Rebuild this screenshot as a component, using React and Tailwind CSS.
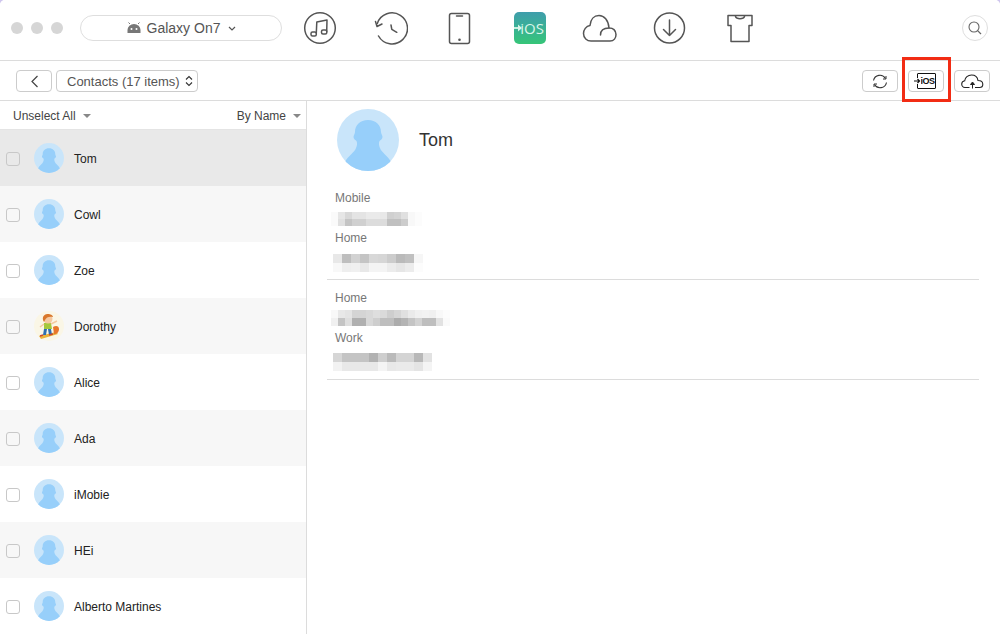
import React from "react";

const S = { fill: "none", stroke: "#555", strokeWidth: 1.5, strokeLinecap: "round", strokeLinejoin: "round" };

function Slot({ c, children }) {
  return (
    <div className="w-[70px] flex justify-center">
      <svg width="36" height="36" viewBox={`${c - 18} 10 36 36`}>{children}</svg>
    </div>
  );
}

function Person({ size }) {
  return (
    <svg width={size} height={size} viewBox="0 0 62 62" className="shrink-0">
      <defs>
        <clipPath id={`c${size}`}><circle cx="31" cy="31" r="31" /></clipPath>
      </defs>
      <circle cx="31" cy="31" r="31" fill="#c9e5fa" />
      <g clipPath={`url(#c${size})`}>
        <path d="M31 11c8 0 13 5 13 12 0 2 1.500 3 1.500 5 0 2-2 3-3 4-1 2-.5 5 .5 7 1 4 8 8 11 14V64H8V53c3-6 10-10 11-14 1-2 1.500-5 .5-7-1-1-3-2-3-4 0-2 1.500-3 1.500-5 0-7 5-12 13-12z" fill="#97cffa" />
      </g>
    </svg>
  );
}

function Dorothy() {
  return (
    <svg width="30" height="30" viewBox="0 0 30 30" className="shrink-0">
      <circle cx="15" cy="15" r="15" fill="#faf6e6" />
      <path d="M5 25l17-4 2 2-17 5z" fill="#e9b23a" />
      <path d="M19 16c3-2 6-1 6 2s-2 5-5 5z" fill="#e8762a" />
      <path d="M10 12h7l1 6h-8z" fill="#a5c83c" />
      <path d="M10 18h3l-1 6H9zM14 18h3l1 6h-3z" fill="#2f6fb0" />
      <circle cx="14" cy="8" r="4.500" fill="#f5c9a0" />
      <path d="M9 9c-1-5 3-6 5-6s5 1 5 3c-3-1-7 0-8 3l-1 2z" fill="#d9772b" />
      <path d="M17 13l6-3M10 13l-4 3" stroke="#f5c9a0" strokeWidth="1.500" />
      <path d="M6 25l3-1M15 24l4-1" stroke="#c9472f" strokeWidth="1.500" />
    </svg>
  );
}

function Mosaic({ w, h, rows }) {
  return (
    <div className="flex flex-col">
      {rows.map((r, i) => (
        <div key={i} className="flex">
          {r.map((v, j) => (
            <div key={j} style={{ width: w, height: h, background: `rgb(${v},${v},${v})` }} />
          ))}
        </div>
      ))}
    </div>
  );
}

function Field({ label, children, ml, pt }) {
  return (
    <div>
      <div className="h-5 pl-[8px] text-xs leading-5 text-[#777]">{label}</div>
      <div className={`h-5 ${ml} ${pt}`}>{children}</div>
    </div>
  );
}

const contacts = ["Tom", "Cowl", "Zoe", "Dorothy", "Alice", "Ada", "iMobie", "HEi", "Alberto Martines"];

export default function App() {
  return (
    <div className="w-[1000px] h-[635px] overflow-hidden bg-[#cfc6ee] font-['Liberation_Sans',sans-serif]">
      <div className="h-full bg-white rounded-t-[5px] overflow-hidden relative">
        {/* Title bar */}
        <div className="h-[61px] border-b border-[#dcdcdc] flex items-center pb-1 bg-white">
          <div className="flex gap-2 pl-[11px] w-[80px]">
            <div className="size-3 rounded-full bg-[#d6d6d6]" />
            <div className="size-3 rounded-full bg-[#d6d6d6]" />
            <div className="size-3 rounded-full bg-[#d6d6d6]" />
          </div>
          <div className="w-[202px] h-[26px] rounded-full border border-[#dedede] flex items-center justify-center gap-[5px] text-sm text-[#555] mr-[3px]">
            <svg width="16" height="12" viewBox="0 0 16 12">
              <path d="M1.500 11V8a6.500 6 0 0 1 13 0v3z" fill="#777" />
              <path d="M4 2L2.500 .5M12 2l1.500-1.500" stroke="#777" strokeWidth="1" />
              <circle cx="5.500" cy="7" r="1" fill="#fff" />
              <circle cx="10.500" cy="7" r="1" fill="#fff" />
            </svg>
            <span>Galaxy On7</span>
            <svg width="8" height="5" viewBox="0 0 8 5" className="ml-[3px]">
              <path d="M1 1l3 3 3-3" fill="none" stroke="#555" strokeWidth="1.200" />
            </svg>
          </div>
          <Slot c={320}>
            <circle cx="320" cy="28" r="15.300" {...S} />
            <path d="M316.300 33l.5-11 10.200-2-.3 11.500" {...S} />
            <rect x="311" y="32" width="5.300" height="4" rx="1.500" {...S} />
            <rect x="321.500" y="30" width="5.300" height="4" rx="1.500" {...S} />
          </Slot>
          <Slot c={390}>
            <path d="M377.300 23.500A15.500 15.500 0 1 1 378.500 36" {...S} />
            <path d="M375.500 21.500l1.500 5 5-2.500" {...S} />
            <path d="M391 25l.8 4.300 5 3" {...S} />
          </Slot>
          <Slot c={460}>
            <rect x="449.500" y="13.500" width="20" height="30" rx="2" {...S} />
            <path d="M456.500 16h6" {...S} />
            <circle cx="459.500" cy="39.800" r="1.300" fill="#555" />
          </Slot>
          <div className="w-[70px] flex justify-center">
            <div className="w-8 h-8 rounded-[5px] bg-linear-to-b from-[#3f9dab] to-[#36c577] relative flex items-center justify-end pr-[2px] text-[15px] leading-none text-[#d9f5ea] font-['Open_Sans',sans-serif]">
              <svg width="9" height="12" viewBox="0 0 9 12" className="absolute left-0 top-[10px]">
                <path d="M0 6h5" fill="none" stroke="#d9f5ea" strokeWidth="1.800" />
                <path d="M4 2.500L8 6 4 9.500z" fill="#d9f5ea" />
              </svg>
              iOS
            </div>
          </div>
          <Slot c={600}>
            <path d="M591 41h19c4 0 6-3 6-6.500 0-4-3-6.700-7-6.500-.5-8-5-12.500-10-12.500s-8.500 4-9 10c-4 .5-6.500 4.500-6.500 8 0 4.500 3.500 7.500 7.500 7.500z" {...S} />
            <path d="M600.500 35c0-4 2.500-7 8.500-7" {...S} />
          </Slot>
          <Slot c={670}>
            <circle cx="669.500" cy="28" r="15" {...S} />
            <path d="M669.500 20v15.500M663.500 29.500l6 6 6-6" {...S} />
          </Slot>
          <Slot c={740}>
            <path d="M728 15.500h24v10h-3v16h-18v-16h-3z" {...S} />
            <path d="M735.500 16.500c1 3 8 3 9 0" {...S} />
          </Slot>
          <div className="ml-auto mr-[12px] size-[26px] rounded-full border border-[#dedede] flex items-center justify-center">
            <svg width="16" height="16" viewBox="0 0 16 16">
              <circle cx="7" cy="7" r="5" fill="none" stroke="#666" strokeWidth="1.100" />
              <path d="M10.600 10.600L14 14" stroke="#666" strokeWidth="1.200" />
            </svg>
          </div>
        </div>

        {/* Toolbar */}
        <div className="h-10 border-b border-[#dcdcdc] flex items-center pt-px pl-4 pr-[10px]">
          <button className="w-9 h-[22px] rounded-[4px] border border-[#ccc] flex items-center justify-center">
            <svg width="9" height="13" viewBox="0 0 9 13">
              <path d="M7.500 1L2 6.500 7.500 12" fill="none" stroke="#444" strokeWidth="1.200" />
            </svg>
          </button>
          <button className="w-[142px] h-[22px] ml-1 rounded-[4px] border border-[#ccc] flex items-center pl-[10px] gap-[5px] text-[13px] text-[#555]">
            <span className="pt-px">Contacts (17 items)</span>
            <svg width="8" height="12" viewBox="0 0 8 12">
              <path d="M1 4.500L4 1.500l3 3M1 7.500l3 3 3-3" fill="none" stroke="#333" strokeWidth="1.100" />
            </svg>
          </button>
          <button className="ml-auto w-9 h-[22px] rounded-[4px] border border-[#ccc] flex items-center justify-center">
            <svg width="16" height="15" viewBox="0 0 16 15">
              <path d="M1.500 6.500A6.500 6.500 0 0 1 13.500 4.500M14.500 8.500A6.500 6.500 0 0 1 2.500 10.500" fill="none" stroke="#333" strokeWidth="1.100" />
              <path d="M14 2V5H11M2 13V10H5" fill="none" stroke="#333" strokeWidth="1" />
            </svg>
          </button>
          <button className="ml-[10px] w-9 h-[22px] rounded-[4px] border border-[#ccc] flex items-center pl-2 relative">
            <span className="w-[19px] h-4 border border-[#111] rounded-[1px] text-[9px] font-bold leading-[14px] text-center tracking-[-0.5px] text-[#111] pl-[2px]">iOS</span>
            <svg width="7" height="6" viewBox="0 0 7 6" className="absolute left-[5px] top-[7px] bg-white">
              <path d="M0 3h5M3.500 1l2 2-2 2" fill="none" stroke="#111" strokeWidth="1.200" />
            </svg>
          </button>
          <button className="ml-[10px] w-9 h-[22px] rounded-[4px] border border-[#ccc] flex items-center justify-center">
            <svg width="23" height="15" viewBox="0 0 23 15">
              <path d="M8.500 13.500H4c-2 0-3.300-1.500-3.300-3.500 0-1.800 1.300-3 3-3.300C4 3.500 7 1 10.500 1c3.500 0 6 2.500 6.500 5.500 2.800 0 4.800 1.500 4.800 3.700 0 2-1.500 3.300-3.300 3.300h-4.500" fill="none" stroke="#222" strokeWidth="1.100" />
              <path d="M11.500 14.500V9M9.500 10.500l2-2.500 2 2.500z" fill="#222" stroke="#222" strokeWidth="1" />
            </svg>
          </button>
        </div>

        {/* Body */}
        <div className="flex">
          <div className="w-[307px] shrink-0 border-r border-[#dcdcdc]">
            <div className="h-[29px] border-b border-[#e4e4e4] flex items-center pt-[2px] text-xs text-[#444] pl-[13px] pr-[5px]">
              <span>Unselect All</span>
              <span className="ml-[7px] w-0 h-0 border-x-[4px] border-x-transparent border-t-[4px] border-t-[#888]" />
              <span className="ml-auto">By Name</span>
              <span className="ml-[7px] w-0 h-0 border-x-[4px] border-x-transparent border-t-[4px] border-t-[#888]" />
            </div>
            {contacts.map((n, i) => (
              <div
                key={n}
                className={`h-14 flex items-center pl-[6px] text-xs text-[#222] ${i === 0 ? "bg-[#e9e9e9]" : i % 2 === 1 ? "bg-[#f7f7f7]" : "bg-white"}`}
              >
                <div className="size-[14px] mt-[2px] rounded-[3px] border border-[#c8c8c8]" />
                <div className="ml-[14px] mr-[10px]">
                  {n === "Dorothy" ? <Dorothy /> : <Person size={30} />}
                </div>
                <span className="mt-[2px]">{n}</span>
              </div>
            ))}
          </div>

          <div className="flex-1 pl-5 pr-[21px]">
            <div className="flex items-start h-[87px] pl-[10px] pt-[8px] text-lg text-[#333]">
              <Person size={62} />
              <span className="ml-5 mt-[17px]">Tom</span>
            </div>
            <div className="h-[92px] border-b border-[#dcdcdc]">
              <Field label="Mobile" ml="ml-[4px]" pt="pt-1">
                <Mosaic w={7} h={7} rows={[
                  [250,230,216,228,228,234,234,232,208,212,224,248,252],
                  [250,224,196,208,208,220,220,220,192,192,204,248,252],
                ]} />
              </Field>
              <Field label="Home" ml="ml-[6px]" pt="pt-[6px]">
                <Mosaic w={9} h={9} rows={[
                  [232,190,210,196,216,214,204,186,192,246],
                  [248,238,240,232,244,244,236,230,236,252],
                ]} />
              </Field>
            </div>
            <div className="h-[100px] pt-2 border-b border-[#dcdcdc]">
              <Field label="Home" ml="ml-[4px]" pt="pt-[2px]">
                <Mosaic w={7} h={8} rows={[
                  [248,232,228,212,212,216,222,218,206,214,224,234,240,242,240,248,252],
                  [240,196,222,176,176,216,206,190,190,172,180,196,210,190,190,226,250],
                ]} />
              </Field>
              <Field label="Work" ml="ml-[6px]" pt="pt-[5px]">
                <Mosaic w={9} h={9} rows={[
                  [214,196,196,196,178,206,186,212,212,184,226],
                  [242,232,232,232,232,244,232,234,234,228,244],
                ]} />
              </Field>
            </div>
          </div>
        </div>

        {/* Red annotation */}
        <div className="absolute left-[902px] top-[57px] w-[49px] h-[45px] border-[3px] border-[#f22c14]" />
      </div>
    </div>
  );
}
